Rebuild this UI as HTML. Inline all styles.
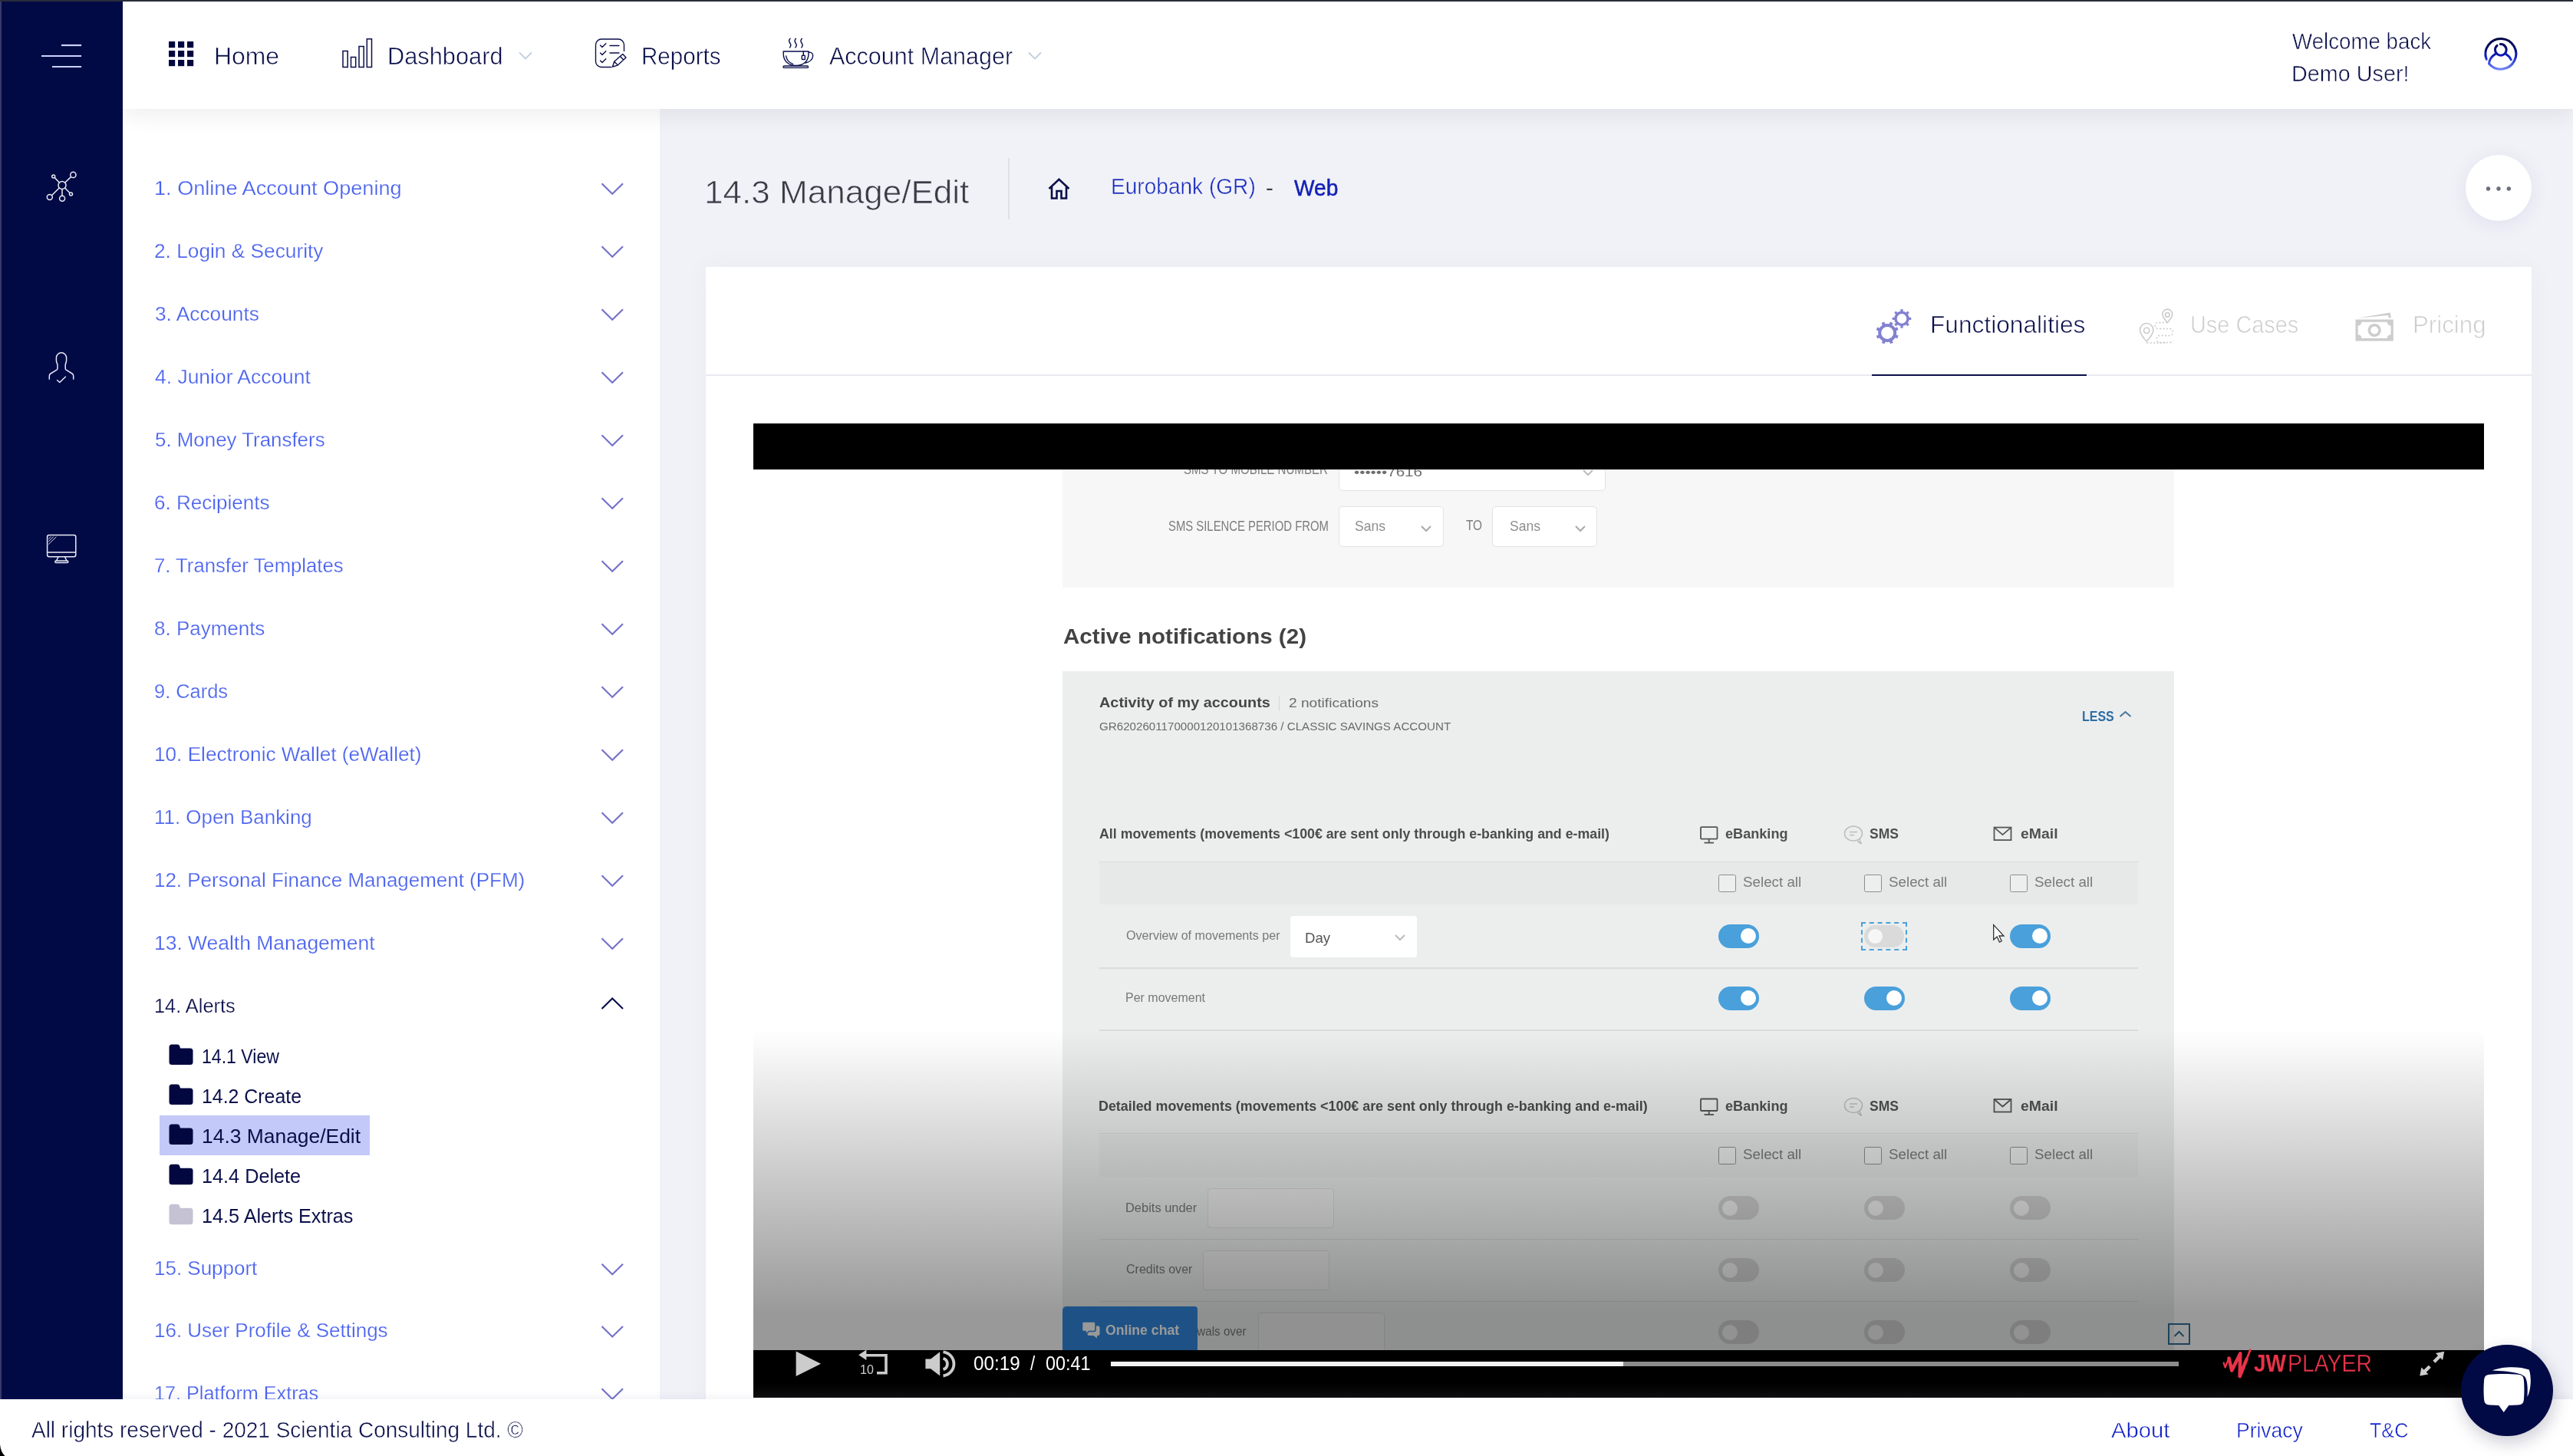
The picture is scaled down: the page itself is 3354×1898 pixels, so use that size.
<!DOCTYPE html>
<html lang="en">
<head>
<meta charset="utf-8">
<title>14.3 Manage/Edit</title>
<style>
*{box-sizing:border-box;margin:0;padding:0}
html,body{width:100%;height:100%;overflow:hidden;background:#f1f2f7;font-family:"Liberation Sans",sans-serif;color:#0a0f4a}
.abs{position:absolute}
.t{position:absolute;white-space:nowrap;line-height:1}
#topline{left:0;top:0;width:3354px;height:2px;background:#2a2d3a;z-index:50}
#leftedge{left:0;top:2px;width:2px;height:1822px;background:#363a6b;z-index:50}
#sidebar{left:0;top:0;width:160px;height:1824px;background:#020a45;z-index:5}
#header{left:160px;top:0;width:3194px;height:142px;background:#fff;box-shadow:0 6px 28px rgba(40,40,80,.09);z-index:4}
#menu{left:160px;top:142px;width:700px;height:1682px;background:#fff;z-index:2;overflow:hidden}
#main{left:860px;top:142px;width:2494px;height:1682px;background:#f1f2f7;z-index:1}
#card{left:920px;top:348px;width:2380px;height:1500px;background:#fff;z-index:3;box-shadow:0 0 30px rgba(80,80,140,.045)}
#footer{left:0;top:1824px;width:3354px;height:74px;background:#fff;z-index:20;box-shadow:0 -3px 10px rgba(90,90,150,.07)}
svg{position:absolute;overflow:visible}
</style>
</head>
<body>
<div id="root" style="position:absolute;left:0;top:0;width:3354px;height:1898px;transform-origin:0 0;overflow:hidden;background:#f1f2f7">
<div class="abs" id="topline"></div>
<div class="abs" id="sidebar"></div>
<div class="abs" id="leftedge"></div>
<div class="abs" id="header"></div>
<div class="abs" id="menu"></div>
<div class="abs" id="main"></div>
<div class="abs" id="card"></div>
<div class="abs" id="footer"></div>
<div class="abs" style="left:0;top:0;z-index:6">
<svg style="left:0;top:0" width="160" height="141"><g stroke="#ccd2ff" stroke-width="2.200" stroke-linecap="butt"><line x1="80" y1="59" x2="106.100" y2="59"/><line x1="54" y1="73" x2="106.100" y2="73"/><line x1="68" y1="87" x2="106.100" y2="87"/></g></svg>
<svg style="left:0;top:0" width="160" height="300"><g stroke="#ebebf4" stroke-width="1.500" fill="none"><circle cx="81" cy="241.500" r="5"/><circle cx="95.400" cy="227.900" r="3.600"/><circle cx="69.700" cy="230" r="2"/><circle cx="64.800" cy="257.100" r="3.500"/><circle cx="81.100" cy="258.700" r="3.500"/><circle cx="92.500" cy="252.900" r="2"/><line x1="84.700" y1="238" x2="92.700" y2="230.400"/><line x1="77.300" y1="238" x2="71.200" y2="231.500"/><line x1="77.300" y1="245" x2="67.400" y2="254.700"/><line x1="81" y1="246.500" x2="81" y2="255.200"/><line x1="84.600" y1="245" x2="91" y2="251.500"/></g></svg>
<svg style="left:0;top:0" width="160" height="520"><g stroke="#e8e8f2" stroke-width="1.500" fill="none" stroke-linecap="butt" stroke-linejoin="round"><path d="M64.300 494.700 V490 Q64.300 488 66 487 L74 482.200 Q75 481.500 75 480 V476 Q75 474.500 74.200 473.500 Q73.400 472 73.400 469 V466.400 A6.600 6.600 0 0 1 86.600 466.400 V469 Q86.600 472 85.800 473.500 Q85.200 474.500 85.200 476 V480 Q85.200 481.500 86.200 482.200 L94 487 Q95.700 488 95.700 490 V494.700"/><path d="M74.200 495.200 L77.800 498.500 L85.800 490.800"/></g></svg>
<svg style="left:0;top:0" width="160" height="760"><g stroke="#ebebf4" stroke-width="1.500" fill="none" stroke-linejoin="round"><rect x="61.600" y="697.400" width="37.200" height="28.300" rx="2.500"/><line x1="61.600" y1="720" x2="98.800" y2="720"/><path d="M76 726 L73.500 731 M84.500 726 L87 731"/><rect x="71.800" y="731" width="17" height="2.400" rx="1.200"/><g stroke-width="0.900"><line x1="63.200" y1="702.500" x2="66.500" y2="699.500"/><line x1="63.200" y1="705.800" x2="69.800" y2="699.700"/><line x1="63.200" y1="709.600" x2="73.400" y2="699.700"/></g></g></svg>
</div>
<div class="abs" style="left:0;top:0;z-index:7">
<svg style="left:0;top:0" width="300" height="141"><g fill="#02073f"><rect x="220" y="54" width="8.2" height="8.2"/><rect x="232" y="54" width="8.2" height="8.2"/><rect x="244" y="54" width="8.2" height="8.2"/><rect x="220" y="66" width="8.2" height="8.2"/><rect x="232" y="66" width="8.2" height="8.2"/><rect x="244" y="66" width="8.2" height="8.2"/><rect x="220" y="78" width="8.2" height="8.2"/><rect x="232" y="78" width="8.2" height="8.2"/><rect x="244" y="78" width="8.2" height="8.2"/></g></svg>
<div class="t " style="left:279.39px;top:58.2px;font-size:30.5px;color:#0a0f4a;transform:scaleX(1.0451);transform-origin:0 0;-webkit-text-stroke:0.55px #fff;">Home</div>
<svg style="left:0;top:0" width="600" height="141"><g stroke="#0a0f4a" stroke-width="1.500" fill="none"><rect x="447" y="66.500" width="6.200" height="21"/><rect x="457.500" y="74.500" width="6.200" height="13"/><rect x="468" y="60.500" width="6.200" height="27"/><rect x="478.300" y="50.800" width="6.200" height="36.700"/></g></svg>
<div class="t " style="left:505.48px;top:58.2px;font-size:30.5px;color:#0a0f4a;transform:scaleX(1.0087);transform-origin:0 0;-webkit-text-stroke:0.55px #fff;">Dashboard</div>
<svg style="left:0;top:0" width="800" height="141"><polyline points="677,68.500 685,76.500 693,68.500" stroke="#c3cde0" stroke-width="1.800" fill="none"/></svg>
<svg style="left:0;top:0" width="900" height="141"><g stroke="#0a0f4a" stroke-width="1.400" fill="none" stroke-linecap="round" stroke-linejoin="round"><path d="M797 87.500 h-13 a7.500 7.500 0 0 1 -7.500 -7.500 v-21.500 a7.500 7.500 0 0 1 7.500 -7.500 h22 a7.500 7.500 0 0 1 7.500 7.500 v8"/><path d="M782.500 59 l2.500 2.500 l4.800 -4.800 M782.500 69 l2.500 2.500 l4.800 -4.800 M782.500 79 l2.500 2.500 l4.800 -4.800 M795 59.500 h12 M795 69 h12"/><path d="M798.500 87 l2.200 -6.800 l11 -9.700 l4.300 4.600 l-10.800 10 z M801 80.500 l4 4.300 M808.500 73.500 l4.200 4.500"/></g></svg>
<div class="t " style="left:835.58px;top:58.2px;font-size:30.5px;color:#0a0f4a;transform:scaleX(0.9691);transform-origin:0 0;-webkit-text-stroke:0.55px #fff;">Reports</div>
<svg style="left:0;top:0" width="1100" height="141"><g stroke="#0a0f4a" stroke-width="1.400" fill="none" stroke-linecap="round" stroke-linejoin="round"><path d="M1021.200 67 H1054 V70 C1054 80 1047 85.500 1037.600 85.500 C1028.200 85.500 1021.200 80 1021.200 70 Z"/><path d="M1054 68 Q1060.300 68 1059.600 73.500 Q1058.500 80 1050 82"/><path d="M1024.600 73 Q1026 81 1033.500 83.300"/><rect x="1045.300" y="72.300" width="4" height="5.200" rx="0.800"/><line x1="1047.300" y1="67" x2="1047.300" y2="72.300"/><rect x="1021" y="86" width="32.500" height="2.400" rx="1.200"/><path d="M1030 50.300 q-2.600 3 -0.200 6 q2.200 2.800 -0.300 5.600"/><path d="M1037.4 50.300 q-2.600 3 -0.200 6 q2.200 2.800 -0.300 5.600"/><path d="M1045.3 50.300 q-2.600 3 -0.200 6 q2.200 2.800 -0.300 5.600"/></g></svg>
<div class="t " style="left:1080.94px;top:58.2px;font-size:30.5px;color:#0a0f4a;transform:scaleX(1.0004);transform-origin:0 0;-webkit-text-stroke:0.55px #fff;">Account Manager</div>
<svg style="left:0;top:0" width="1400" height="141"><polyline points="1341,68.500 1349,76.500 1357,68.500" stroke="#c3cde0" stroke-width="1.800" fill="none"/></svg>
<div class="t " style="left:2987.88px;top:39.2px;font-size:30px;color:#0a0f4a;transform:scaleX(0.9230);transform-origin:0 0;-webkit-text-stroke:0.55px #fff;">Welcome back</div>
<div class="t " style="left:2986.64px;top:81.2px;font-size:30px;color:#0a0f4a;transform:scaleX(0.9590);transform-origin:0 0;-webkit-text-stroke:0.55px #fff;">Demo User!</div>
<svg style="left:0;top:0" width="3354" height="141"><defs><linearGradient id="ug" gradientUnits="userSpaceOnUse" x1="0" y1="49" x2="0" y2="92"><stop offset="0" stop-color="#020540"/><stop offset="0.3" stop-color="#050a66"/><stop offset="0.55" stop-color="#0c1cc0"/><stop offset="1" stop-color="#7a8bff"/></linearGradient></defs><g stroke="url(#ug)" stroke-width="3" fill="none" stroke-linecap="round"><path d="M3241.200 77.300 A19.900 19.900 0 1 1 3244.500 83 A16.500 16.500 0 0 1 3252.400 70.700"/><path d="M3266.900 70.700 A16.500 16.500 0 0 1 3273.300 77.800"/><path d="M3259.350 57.600 A7.300 7.300 0 1 1 3255.050 59.350"/></g></svg>
</div>
<div class="abs" style="left:0;top:0;z-index:8">
<div class="t " style="left:200.53px;top:231.7px;font-size:26.5px;color:#4a62ee;transform:scaleX(1.0233);transform-origin:0 0;-webkit-text-stroke:0.25px #fff;">1. Online Account Opening</div>
<svg style="left:0;top:0" width="860" height="10"><polyline points="784.5,239.3 798.2,252.8 812,239.3" stroke="#7472c9" stroke-width="2.200" fill="none"/></svg>
<div class="t " style="left:201.28px;top:313.7px;font-size:26.5px;color:#4a62ee;transform:scaleX(0.9912);transform-origin:0 0;-webkit-text-stroke:0.25px #fff;">2. Login &amp; Security</div>
<svg style="left:0;top:0" width="860" height="10"><polyline points="784.5,321.3 798.2,334.8 812,321.3" stroke="#7472c9" stroke-width="2.200" fill="none"/></svg>
<div class="t " style="left:201.60px;top:395.7px;font-size:26.5px;color:#4a62ee;transform:scaleX(0.9916);transform-origin:0 0;-webkit-text-stroke:0.25px #fff;">3. Accounts</div>
<svg style="left:0;top:0" width="860" height="10"><polyline points="784.5,403.3 798.2,416.8 812,403.3" stroke="#7472c9" stroke-width="2.200" fill="none"/></svg>
<div class="t " style="left:201.99px;top:477.7px;font-size:26.5px;color:#4a62ee;transform:scaleX(0.9980);transform-origin:0 0;-webkit-text-stroke:0.25px #fff;">4. Junior Account</div>
<svg style="left:0;top:0" width="860" height="10"><polyline points="784.5,485.3 798.2,498.8 812,485.3" stroke="#7472c9" stroke-width="2.200" fill="none"/></svg>
<div class="t " style="left:201.56px;top:559.7px;font-size:26.5px;color:#4a62ee;transform:scaleX(0.9769);transform-origin:0 0;-webkit-text-stroke:0.25px #fff;">5. Money Transfers</div>
<svg style="left:0;top:0" width="860" height="10"><polyline points="784.5,567.3 798.2,580.8 812,567.3" stroke="#7472c9" stroke-width="2.200" fill="none"/></svg>
<div class="t " style="left:201.28px;top:641.7px;font-size:26.5px;color:#4a62ee;transform:scaleX(0.9822);transform-origin:0 0;-webkit-text-stroke:0.25px #fff;">6. Recipients</div>
<svg style="left:0;top:0" width="860" height="10"><polyline points="784.5,649.3 798.2,662.8 812,649.3" stroke="#7472c9" stroke-width="2.200" fill="none"/></svg>
<div class="t " style="left:201.28px;top:723.7px;font-size:26.5px;color:#4a62ee;transform:scaleX(0.9698);transform-origin:0 0;-webkit-text-stroke:0.25px #fff;">7. Transfer Templates</div>
<svg style="left:0;top:0" width="860" height="10"><polyline points="784.5,731.3 798.2,744.8 812,731.3" stroke="#7472c9" stroke-width="2.200" fill="none"/></svg>
<div class="t " style="left:201.47px;top:805.7px;font-size:26.5px;color:#4a62ee;transform:scaleX(0.9801);transform-origin:0 0;-webkit-text-stroke:0.25px #fff;">8. Payments</div>
<svg style="left:0;top:0" width="860" height="10"><polyline points="784.5,813.3 798.2,826.8 812,813.3" stroke="#7472c9" stroke-width="2.200" fill="none"/></svg>
<div class="t " style="left:201.41px;top:887.7px;font-size:26.5px;color:#4a62ee;transform:scaleX(0.9586);transform-origin:0 0;-webkit-text-stroke:0.25px #fff;">9. Cards</div>
<svg style="left:0;top:0" width="860" height="10"><polyline points="784.5,895.3 798.2,908.8 812,895.3" stroke="#7472c9" stroke-width="2.200" fill="none"/></svg>
<div class="t " style="left:200.61px;top:969.7px;font-size:26.5px;color:#4a62ee;transform:scaleX(0.9874);transform-origin:0 0;-webkit-text-stroke:0.25px #fff;">10. Electronic Wallet (eWallet)</div>
<svg style="left:0;top:0" width="860" height="10"><polyline points="784.5,977.3 798.2,990.8 812,977.3" stroke="#7472c9" stroke-width="2.200" fill="none"/></svg>
<div class="t " style="left:200.62px;top:1051.7px;font-size:26.5px;color:#4a62ee;transform:scaleX(0.9788);transform-origin:0 0;-webkit-text-stroke:0.25px #fff;">11. Open Banking</div>
<svg style="left:0;top:0" width="860" height="10"><polyline points="784.5,1059.3 798.2,1072.8 812,1059.3" stroke="#7472c9" stroke-width="2.200" fill="none"/></svg>
<div class="t " style="left:200.62px;top:1133.7px;font-size:26.5px;color:#4a62ee;transform:scaleX(0.9792);transform-origin:0 0;-webkit-text-stroke:0.25px #fff;">12. Personal Finance Management (PFM)</div>
<svg style="left:0;top:0" width="860" height="10"><polyline points="784.5,1141.3 798.2,1154.8 812,1141.3" stroke="#7472c9" stroke-width="2.200" fill="none"/></svg>
<div class="t " style="left:200.59px;top:1215.7px;font-size:26.5px;color:#4a62ee;transform:scaleX(0.9978);transform-origin:0 0;-webkit-text-stroke:0.25px #fff;">13. Wealth Management</div>
<svg style="left:0;top:0" width="860" height="10"><polyline points="784.5,1223.3 798.2,1236.8 812,1223.3" stroke="#7472c9" stroke-width="2.200" fill="none"/></svg>
<div class="t " style="left:200.67px;top:1297.6px;font-size:26.5px;color:#0a0f4a;transform:scaleX(0.9562);transform-origin:0 0;-webkit-text-stroke:0.25px #fff;">14. Alerts</div>
<svg style="left:0;top:0" width="860" height="10"><polyline points="784.5,1315.0 798.2,1301.5 812,1315.0" stroke="#0a0f4a" stroke-width="2.200" fill="none"/></svg>
<div class="abs" style="left:208.100px;top:1453.900px;width:273.900px;height:51.900px;background:#c3c9f8"></div>
<svg style="left:0;top:0" width="860" height="10"><path d="M220.500 1364.9 q0 -3.500 3.500 -3.500 h7 q2.500 0 3.200 2.200 l0.800 2.800 h13 q3.500 0 3.500 3.500 v14.500 q0 3.500 -3.500 3.500 h-24 q-3.500 0 -3.500 -3.500 z" fill="#02073f"/></svg>
<div class="t " style="left:262.94px;top:1364.8px;font-size:25.8px;color:#0a0f4a;transform:scaleX(0.8951);transform-origin:0 0;">14.1 View</div>
<svg style="left:0;top:0" width="860" height="10"><path d="M220.500 1417.0 q0 -3.500 3.500 -3.500 h7 q2.500 0 3.200 2.200 l0.800 2.800 h13 q3.500 0 3.500 3.500 v14.500 q0 3.500 -3.500 3.500 h-24 q-3.500 0 -3.500 -3.500 z" fill="#02073f"/></svg>
<div class="t " style="left:262.81px;top:1416.9px;font-size:25.8px;color:#0a0f4a;transform:scaleX(0.9642);transform-origin:0 0;">14.2 Create</div>
<svg style="left:0;top:0" width="860" height="10"><path d="M220.500 1469.1 q0 -3.500 3.500 -3.500 h7 q2.500 0 3.200 2.200 l0.800 2.800 h13 q3.500 0 3.500 3.500 v14.500 q0 3.500 -3.500 3.500 h-24 q-3.500 0 -3.500 -3.500 z" fill="#02073f"/></svg>
<div class="t " style="left:262.69px;top:1469.0px;font-size:25.8px;color:#0a0f4a;transform:scaleX(1.0240);transform-origin:0 0;">14.3 Manage/Edit</div>
<svg style="left:0;top:0" width="860" height="10"><path d="M220.500 1521.2 q0 -3.500 3.500 -3.500 h7 q2.500 0 3.200 2.200 l0.800 2.800 h13 q3.500 0 3.500 3.500 v14.500 q0 3.500 -3.500 3.500 h-24 q-3.500 0 -3.500 -3.500 z" fill="#02073f"/></svg>
<div class="t " style="left:262.78px;top:1521.1px;font-size:25.8px;color:#0a0f4a;transform:scaleX(0.9786);transform-origin:0 0;">14.4 Delete</div>
<svg style="left:0;top:0" width="860" height="10"><path d="M220.500 1573.3 q0 -3.500 3.500 -3.500 h7 q2.500 0 3.200 2.200 l0.800 2.800 h13 q3.500 0 3.500 3.500 v14.500 q0 3.500 -3.500 3.500 h-24 q-3.500 0 -3.500 -3.500 z" fill="#c5c2d4"/></svg>
<div class="t " style="left:262.78px;top:1573.2px;font-size:25.8px;color:#0a0f4a;transform:scaleX(0.9764);transform-origin:0 0;">14.5 Alerts Extras</div>
<div class="t " style="left:200.62px;top:1640.1px;font-size:26.5px;color:#4a62ee;transform:scaleX(0.9799);transform-origin:0 0;-webkit-text-stroke:0.25px #fff;">15. Support</div>
<svg style="left:0;top:0" width="860" height="10"><polyline points="784.5,1647.7 798.2,1661.2 812,1647.7" stroke="#7472c9" stroke-width="2.200" fill="none"/></svg>
<div class="t " style="left:200.62px;top:1721.4px;font-size:26.5px;color:#4a62ee;transform:scaleX(0.9801);transform-origin:0 0;-webkit-text-stroke:0.25px #fff;">16. User Profile &amp; Settings</div>
<svg style="left:0;top:0" width="860" height="10"><polyline points="784.5,1729.0 798.2,1742.5 812,1729.0" stroke="#7472c9" stroke-width="2.200" fill="none"/></svg>
<div class="t " style="left:200.68px;top:1802.7px;font-size:26.5px;color:#4a62ee;transform:scaleX(0.9507);transform-origin:0 0;-webkit-text-stroke:0.25px #fff;">17. Platform Extras</div>
<svg style="left:0;top:0" width="860" height="10"><polyline points="784.5,1810.3 798.2,1823.8 812,1810.3" stroke="#7472c9" stroke-width="2.200" fill="none"/></svg>
</div>
<div class="abs" style="left:0;top:0;z-index:9">
<div class="t " style="left:917.64px;top:229.0px;font-size:43px;color:#3a3b46;transform:scaleX(1.0246);transform-origin:0 0;-webkit-text-stroke:0.7px #f1f2f7;">14.3 Manage/Edit</div>
<div class="abs" style="left:1314px;top:206px;width:2px;height:80px;background:#dfe0e8"></div>
<svg style="left:0;top:0" width="1500" height="300"><path d="M1367.500 246 l13 -12.200 l13 12.200 M1371 243.500 v15 h6.500 v-9.500 h6 v9.500 h6.500 v-15" stroke="#0a0f4a" stroke-width="2.600" fill="none" stroke-linejoin="miter"/></svg>
<div class="t " style="left:1447.70px;top:228.3px;font-size:29.5px;color:#1b2cbe;transform:scaleX(0.9514);transform-origin:0 0;-webkit-text-stroke:0.45px #f1f2f7;">Eurobank (GR)</div>
<div class="t " style="left:1650.09px;top:231.3px;font-size:28px;color:#3a3b46;transform:scaleX(1.0533);transform-origin:0 0;">-</div>
<div class="t " style="left:1686.88px;top:230.4px;font-size:29.5px;color:#1320b5;transform:scaleX(0.9531);transform-origin:0 0;-webkit-text-stroke:0.5px #1320b5;">Web</div>
<div class="abs" style="left:3214px;top:202px;width:86px;height:86px;border-radius:50%;background:#fff;box-shadow:0 4px 24px rgba(90,90,170,.12)"></div>
<svg style="left:0;top:0" width="3354" height="300"><g fill="#6b6e7c"><circle cx="3243.500" cy="246" r="2.700"/><circle cx="3257" cy="246" r="2.700"/><circle cx="3270.300" cy="246" r="2.700"/></g></svg>
<div class="abs" style="left:920px;top:488px;width:2380px;height:2px;background:#e9eaf1"></div>
<div class="abs" style="left:2440px;top:487.500px;width:280px;height:2.500px;background:#0a0f4a"></div>
<svg style="left:0;top:0" width="3354" height="500"><circle cx="2460.2" cy="433.9" r="10.00" stroke="#8381d1" stroke-width="4.00" fill="none"/><rect x="2458.22" y="419.10" width="3.96" height="4.30" fill="#8381d1" transform="rotate(22.0 2460.2 433.9)"/><rect x="2458.22" y="419.10" width="3.96" height="4.30" fill="#8381d1" transform="rotate(67.0 2460.2 433.9)"/><rect x="2458.22" y="419.10" width="3.96" height="4.30" fill="#8381d1" transform="rotate(112.0 2460.2 433.9)"/><rect x="2458.22" y="419.10" width="3.96" height="4.30" fill="#8381d1" transform="rotate(157.0 2460.2 433.9)"/><rect x="2458.22" y="419.10" width="3.96" height="4.30" fill="#8381d1" transform="rotate(202.0 2460.2 433.9)"/><rect x="2458.22" y="419.10" width="3.96" height="4.30" fill="#8381d1" transform="rotate(247.0 2460.2 433.9)"/><rect x="2458.22" y="419.10" width="3.96" height="4.30" fill="#8381d1" transform="rotate(292.0 2460.2 433.9)"/><rect x="2458.22" y="419.10" width="3.96" height="4.30" fill="#8381d1" transform="rotate(337.0 2460.2 433.9)"/><circle cx="2479" cy="415.4" r="8.05" stroke="#8381d1" stroke-width="3.50" fill="none"/><rect x="2477.38" y="403.10" width="3.23" height="4.00" fill="#8381d1" transform="rotate(0.0 2479 415.4)"/><rect x="2477.38" y="403.10" width="3.23" height="4.00" fill="#8381d1" transform="rotate(45.0 2479 415.4)"/><rect x="2477.38" y="403.10" width="3.23" height="4.00" fill="#8381d1" transform="rotate(90.0 2479 415.4)"/><rect x="2477.38" y="403.10" width="3.23" height="4.00" fill="#8381d1" transform="rotate(135.0 2479 415.4)"/><rect x="2477.38" y="403.10" width="3.23" height="4.00" fill="#8381d1" transform="rotate(180.0 2479 415.4)"/><rect x="2477.38" y="403.10" width="3.23" height="4.00" fill="#8381d1" transform="rotate(225.0 2479 415.4)"/><rect x="2477.38" y="403.10" width="3.23" height="4.00" fill="#8381d1" transform="rotate(270.0 2479 415.4)"/><rect x="2477.38" y="403.10" width="3.23" height="4.00" fill="#8381d1" transform="rotate(315.0 2479 415.4)"/></svg>
<svg style="left:0;top:0" width="3354" height="500"><g stroke="#cbcbcb" stroke-width="1.600" fill="none"><path d="M2798.200 445 q-8.700 -9.500 -8.700 -14.800 a8.700 8.700 0 0 1 17.400 0 q0 5.300 -8.700 14.800 z"/><circle cx="2798.200" cy="430.800" r="3.600"/><path d="M2825.300 420.500 q-6.400 -7 -6.400 -11 a6.400 6.400 0 0 1 12.800 0 q0 4 -6.400 11 z"/><circle cx="2825.300" cy="410.300" r="2.800"/><path d="M2825.300 420.500 h-12 q-4 0 -4 4 t4 4 h15 q4 0 4 4.500 t-4 4.500 h-13 q-4 0 -4 4.500 t4 4.500 h13 q4 0 4 -2 M2798.200 447 h26" stroke-dasharray="2.200 2.200" stroke-width="1.400"/></g></svg>
<svg style="left:0;top:0" width="3354" height="500"><g fill="#cdcdcd"><path d="M3070.500 416.400 h49.300 v28.100 h-49.300 z M3078.500 419.800 a4.800 4.800 0 0 1 -4.800 4.800 v11.600 a4.800 4.800 0 0 1 4.800 4.800 h33.300 a4.800 4.800 0 0 1 4.800 -4.800 v-11.600 a4.800 4.800 0 0 1 -4.800 -4.800 z" fill-rule="evenodd"/><path d="M3095.200 421.900 a8.600 8.600 0 1 0 0.010 0 z M3095.200 425.500 a5 5 0 1 1 -0.010 0 z" fill-rule="evenodd"/><path d="M3073.400 414.700 l42.200 -7.300 l1.400 6.800 l-3.200 0.300 l-0.700 -3.600 z"/></g></svg>
<div class="t " style="left:2516.20px;top:407.7px;font-size:31px;color:#0a0f4a;transform:scaleX(1.0216);transform-origin:0 0;-webkit-text-stroke:0.6px #fff;">Functionalities</div>
<div class="t " style="left:2855.37px;top:407.7px;font-size:31px;color:#cdcdcd;transform:scaleX(0.9318);transform-origin:0 0;-webkit-text-stroke:0.7px #fff;">Use Cases</div>
<div class="t " style="left:3144.73px;top:407.7px;font-size:31px;color:#cdcdcd;transform:scaleX(1.0087);transform-origin:0 0;-webkit-text-stroke:0.7px #fff;">Pricing</div>
</div>
<div class="abs" style="left:0;top:0;z-index:21">
<div class="t " style="left:40.55px;top:1850.0px;font-size:29px;color:#0a0f4a;transform:scaleX(0.9644);transform-origin:0 0;-webkit-text-stroke:0.5px #fff;">All rights reserved - 2021 Scientia Consulting Ltd. ©</div>
<div class="t " style="left:2751.94px;top:1849.9px;font-size:28.5px;color:#0f1fc8;transform:scaleX(1.0240);transform-origin:0 0;-webkit-text-stroke:0.5px #fff;">About</div>
<div class="t " style="left:2914.83px;top:1849.9px;font-size:28.5px;color:#0f1fc8;transform:scaleX(0.9293);transform-origin:0 0;-webkit-text-stroke:0.5px #fff;">Privacy</div>
<div class="t " style="left:3089.23px;top:1849.9px;font-size:28.5px;color:#0f1fc8;transform:scaleX(0.8829);transform-origin:0 0;-webkit-text-stroke:0.5px #fff;">T&amp;C</div>
</div>
<div class="abs" style="left:982px;top:552px;width:2256px;height:1270px;background:#000;overflow:hidden;z-index:10">
<div class="abs" id="vf" style="left:-982px;top:-552px;width:3354px;height:1898px">
<div class="abs" style="left:982px;top:612px;width:2256px;height:1148px;background:#fff"></div>
<div class="abs" id="vc" style="left:0;top:0;width:3354px;height:1898px;filter:blur(0.6px)">
<div class="abs" style="left:1385px;top:600px;width:1449px;height:166px;background:#f7f7f7"></div>
<div class="abs" style="left:1385px;top:875px;width:1449px;height:900px;background:#eceeee"></div>
<div class="t " style="left:1542.82px;top:602.8px;font-size:18px;color:#7c7c7c;transform:scaleX(0.8373);transform-origin:0 0;">SMS TO MOBILE NUMBER</div>
<div class="abs" style="left:1745px;top:590px;width:348px;height:50px;background:#fff;border:1.500px solid #e2e2e2;border-radius:5px"></div>
<div class="t " style="left:1764.89px;top:606.6px;font-size:17px;color:#6e6e6e;transform:scaleX(1.2106);transform-origin:0 0;">••••••7616</div>
<svg style="left:0;top:0" width="2200" height="700"><polyline points="2064,613 2070,619 2076,613" stroke="#bbb" stroke-width="2" fill="none"/></svg>
<div class="t " style="left:1522.93px;top:676.8px;font-size:18px;color:#7c7c7c;transform:scaleX(0.8255);transform-origin:0 0;">SMS SILENCE PERIOD FROM</div>
<div class="abs" style="left:1745px;top:660px;width:137px;height:53px;background:#fff;border:1.500px solid #e2e2e2;border-radius:5px"></div>
<div class="t " style="left:1766.20px;top:675.5px;font-size:19px;color:#8d8d8d;transform:scaleX(0.9244);transform-origin:0 0;">Sans</div>
<div class="t " style="left:1911.35px;top:676.3px;font-size:18px;color:#7c7c7c;transform:scaleX(0.8545);transform-origin:0 0;">TO</div>
<div class="abs" style="left:1945px;top:660px;width:137px;height:53px;background:#fff;border:1.500px solid #e2e2e2;border-radius:5px"></div>
<div class="t " style="left:1967.60px;top:675.5px;font-size:19px;color:#8d8d8d;transform:scaleX(0.9244);transform-origin:0 0;">Sans</div>
<svg style="left:0;top:0" width="2200" height="720"><polyline points="1853,686 1859,692 1865,686" stroke="#aaa" stroke-width="2" fill="none"/><polyline points="2054,686 2060,692 2066,686" stroke="#aaa" stroke-width="2" fill="none"/></svg>
<div class="t " style="left:1386.06px;top:816.1px;font-size:28px;color:#434343;font-weight:bold;transform:scaleX(1.0557);transform-origin:0 0;">Active notifications (2)</div>
<div class="t " style="left:1432.91px;top:905.9px;font-size:19px;color:#474747;font-weight:bold;transform:scaleX(1.0451);transform-origin:0 0;">Activity of my accounts</div>
<div class="abs" style="left:1667px;top:908px;width:1.2px;height:19px;background:#d6d6d6"></div>
<div class="t " style="left:1679.64px;top:907.6px;font-size:17px;color:#6a6a6a;transform:scaleX(1.1260);transform-origin:0 0;">2 notifications</div>
<div class="t " style="left:1432.64px;top:939.2px;font-size:15.5px;color:#6a6a6a;transform:scaleX(0.9769);transform-origin:0 0;">GR6202601170000120101368736 / CLASSIC SAVINGS ACCOUNT</div>
<div class="t " style="left:2713.93px;top:924.8px;font-size:18px;color:#2e6ea6;font-weight:bold;transform:scaleX(0.8868);transform-origin:0 0;">LESS</div>
<svg style="left:0;top:0" width="2800" height="950"><polyline points="2763.500,934 2770.500,928 2777.500,934" stroke="#4a739c" stroke-width="2" fill="none"/></svg>
<div class="t " style="left:1432.96px;top:1078.4px;font-size:18px;color:#4c4c4c;font-weight:bold;transform:scaleX(0.9870);transform-origin:0 0;">All movements (movements &lt;100€ are sent only through e-banking and e-mail)</div>
<svg style="left:0;top:0" width="2800" height="10"><g stroke="#555" stroke-width="1.800" fill="none"><rect x="2217" y="1078.1" width="21.500" height="15.500" rx="1"/><line x1="2227.700" y1="1093.6" x2="2227.700" y2="1098.1"/><line x1="2221.500" y1="1098.6" x2="2234" y2="1098.6"/></g><g stroke="#bdbdbd" stroke-width="1.500" fill="none"><ellipse cx="2416" cy="1086.6" rx="11.500" ry="9.500"/><path d="M2421 1095.1 q2 4 6 4.500 q-3 -2 -2.500 -6.500"/><line x1="2411" y1="1084.6" x2="2421" y2="1084.6"/><line x1="2411" y1="1088.6" x2="2417" y2="1088.6"/></g><g stroke="#555" stroke-width="1.800" fill="none"><rect x="2599.500" y="1078.6" width="22" height="16.500"/><polyline points="2599.500,1078.6 2610.500,1088.1 2621.500,1078.6"/></g></svg>
<div class="t " style="left:2249.29px;top:1078.4px;font-size:18px;color:#505050;font-weight:bold;transform:scaleX(1.0062);transform-origin:0 0;">eBanking</div>
<div class="t " style="left:2436.50px;top:1078.4px;font-size:18px;color:#505050;font-weight:bold;transform:scaleX(0.9713);transform-origin:0 0;">SMS</div>
<div class="t " style="left:2633.84px;top:1078.4px;font-size:18px;color:#505050;font-weight:bold;transform:scaleX(1.0780);transform-origin:0 0;">eMail</div>
<div class="abs" style="left:1433px;top:1122.6px;width:1354px;height:1.400px;background:#d9dbdc"></div>
<div class="abs" style="left:1433px;top:1124px;width:1354px;height:55px;background:rgba(120,110,110,.035)"></div>
<div class="abs" style="left:2239.5px;top:1139.5px;width:23.500px;height:23.500px;border:1.800px solid #8e8e8e;border-radius:2.500px;background:rgba(255,255,255,.25)"></div>
<div class="t " style="left:2271.85px;top:1141.4px;font-size:18px;color:#7a7a7a;transform:scaleX(1.0434);transform-origin:0 0;">Select all</div>
<div class="abs" style="left:2429.5px;top:1139.5px;width:23.500px;height:23.500px;border:1.800px solid #8e8e8e;border-radius:2.500px;background:rgba(255,255,255,.25)"></div>
<div class="t " style="left:2461.85px;top:1141.4px;font-size:18px;color:#7a7a7a;transform:scaleX(1.0434);transform-origin:0 0;">Select all</div>
<div class="abs" style="left:2619.5px;top:1139.5px;width:23.500px;height:23.500px;border:1.800px solid #8e8e8e;border-radius:2.500px;background:rgba(255,255,255,.25)"></div>
<div class="t " style="left:2651.85px;top:1141.4px;font-size:18px;color:#7a7a7a;transform:scaleX(1.0434);transform-origin:0 0;">Select all</div>
<div class="t " style="left:1467.64px;top:1210.6px;font-size:17px;color:#787878;transform:scaleX(0.9480);transform-origin:0 0;">Overview of movements per</div>
<div class="abs" style="left:1681.500px;top:1194.300px;width:165px;height:53.300px;background:#fff;border-radius:4px"></div>
<div class="t " style="left:1700.97px;top:1212.9px;font-size:19px;color:#555;transform:scaleX(0.9785);transform-origin:0 0;">Day</div>
<svg style="left:0;top:0" width="2200" height="1300"><polyline points="1819,1219 1825,1225 1831,1219" stroke="#bbb" stroke-width="2" fill="none"/></svg>
<div class="abs" style="left:2239.5px;top:1204.5px;width:53px;height:31px;border-radius:16px;background:#4aa0da"></div>
<div class="abs" style="left:2268.5px;top:1210.0px;width:20px;height:20px;border-radius:50%;background:#fff"></div>
<div class="abs" style="left:2426px;top:1201.500px;width:60px;height:37.500px;border:2px dashed #4aa0da"></div>
<div class="abs" style="left:2430px;top:1205.500px;width:52px;height:29.500px;border-radius:15px;background:#dadada"></div>
<div class="abs" style="left:2435px;top:1210.500px;width:19px;height:19px;border-radius:50%;background:#f6f6f6"></div>
<div class="abs" style="left:2619.5px;top:1204.5px;width:53px;height:31px;border-radius:16px;background:#4aa0da"></div>
<div class="abs" style="left:2648.5px;top:1210.0px;width:20px;height:20px;border-radius:50%;background:#fff"></div>
<svg style="left:0;top:0" width="2700" height="1300"><path d="M2598.700 1205.600 v19.500 l4.500 -4 l3.200 7 l2.800 -1.300 l-3.200 -6.800 h6 z" fill="#fff" stroke="#333" stroke-width="1.300"/></svg>
<div class="abs" style="left:1433px;top:1261.1999999999998px;width:1354px;height:1.400px;background:#d9dbdc"></div>
<div class="t " style="left:1467.09px;top:1291.6px;font-size:17px;color:#787878;transform:scaleX(0.9411);transform-origin:0 0;">Per movement</div>
<div class="abs" style="left:2239.5px;top:1285.5px;width:53px;height:31px;border-radius:16px;background:#4aa0da"></div>
<div class="abs" style="left:2268.5px;top:1291.0px;width:20px;height:20px;border-radius:50%;background:#fff"></div>
<div class="abs" style="left:2429.5px;top:1285.5px;width:53px;height:31px;border-radius:16px;background:#4aa0da"></div>
<div class="abs" style="left:2458.5px;top:1291.0px;width:20px;height:20px;border-radius:50%;background:#fff"></div>
<div class="abs" style="left:2619.5px;top:1285.5px;width:53px;height:31px;border-radius:16px;background:#4aa0da"></div>
<div class="abs" style="left:2648.5px;top:1291.0px;width:20px;height:20px;border-radius:50%;background:#fff"></div>
<div class="abs" style="left:1433px;top:1342.1999999999998px;width:1354px;height:1.400px;background:#d9dbdc"></div>
<div class="t " style="left:1432.20px;top:1432.8px;font-size:18px;color:#4c4c4c;font-weight:bold;transform:scaleX(0.9930);transform-origin:0 0;">Detailed movements (movements &lt;100€ are sent only through e-banking and e-mail)</div>
<svg style="left:0;top:0" width="2800" height="10"><g stroke="#555" stroke-width="1.800" fill="none"><rect x="2217" y="1432.5" width="21.500" height="15.500" rx="1"/><line x1="2227.700" y1="1448.0" x2="2227.700" y2="1452.5"/><line x1="2221.500" y1="1453.0" x2="2234" y2="1453.0"/></g><g stroke="#bdbdbd" stroke-width="1.500" fill="none"><ellipse cx="2416" cy="1441.0" rx="11.500" ry="9.500"/><path d="M2421 1449.5 q2 4 6 4.500 q-3 -2 -2.500 -6.500"/><line x1="2411" y1="1439.0" x2="2421" y2="1439.0"/><line x1="2411" y1="1443.0" x2="2417" y2="1443.0"/></g><g stroke="#555" stroke-width="1.800" fill="none"><rect x="2599.500" y="1433.0" width="22" height="16.500"/><polyline points="2599.500,1433.0 2610.500,1442.5 2621.500,1433.0"/></g></svg>
<div class="t " style="left:2249.29px;top:1432.8px;font-size:18px;color:#505050;font-weight:bold;transform:scaleX(1.0062);transform-origin:0 0;">eBanking</div>
<div class="t " style="left:2436.50px;top:1432.8px;font-size:18px;color:#505050;font-weight:bold;transform:scaleX(0.9713);transform-origin:0 0;">SMS</div>
<div class="t " style="left:2633.84px;top:1432.8px;font-size:18px;color:#505050;font-weight:bold;transform:scaleX(1.0780);transform-origin:0 0;">eMail</div>
<div class="abs" style="left:1433px;top:1476.6px;width:1354px;height:1.400px;background:#d9dbdc"></div>
<div class="abs" style="left:1433px;top:1479px;width:1354px;height:55px;background:rgba(120,110,110,.035)"></div>
<div class="abs" style="left:2239.5px;top:1494.5px;width:23.500px;height:23.500px;border:1.800px solid #8e8e8e;border-radius:2.500px;background:rgba(255,255,255,.25)"></div>
<div class="t " style="left:2271.85px;top:1496.4px;font-size:18px;color:#7a7a7a;transform:scaleX(1.0434);transform-origin:0 0;">Select all</div>
<div class="abs" style="left:2429.5px;top:1494.5px;width:23.500px;height:23.500px;border:1.800px solid #8e8e8e;border-radius:2.500px;background:rgba(255,255,255,.25)"></div>
<div class="t " style="left:2461.85px;top:1496.4px;font-size:18px;color:#7a7a7a;transform:scaleX(1.0434);transform-origin:0 0;">Select all</div>
<div class="abs" style="left:2619.5px;top:1494.5px;width:23.500px;height:23.500px;border:1.800px solid #8e8e8e;border-radius:2.500px;background:rgba(255,255,255,.25)"></div>
<div class="t " style="left:2651.85px;top:1496.4px;font-size:18px;color:#7a7a7a;transform:scaleX(1.0434);transform-origin:0 0;">Select all</div>
<div class="t " style="left:1467.05px;top:1565.6px;font-size:17px;color:#787878;transform:scaleX(0.9671);transform-origin:0 0;">Debits under</div>
<div class="abs" style="left:1574px;top:1549px;width:165px;height:52px;background:#f1f1f1;border:1.500px solid #dcdcdc;border-radius:4px"></div>
<div class="abs" style="left:2239.5px;top:1559px;width:53px;height:31px;border-radius:16px;background:#d2d2d2"></div>
<div class="abs" style="left:2244.5px;top:1564.5px;width:20px;height:20px;border-radius:50%;background:#f3f3f3"></div>
<div class="abs" style="left:2429.5px;top:1559px;width:53px;height:31px;border-radius:16px;background:#d2d2d2"></div>
<div class="abs" style="left:2434.5px;top:1564.5px;width:20px;height:20px;border-radius:50%;background:#f3f3f3"></div>
<div class="abs" style="left:2619.5px;top:1559px;width:53px;height:31px;border-radius:16px;background:#d2d2d2"></div>
<div class="abs" style="left:2624.5px;top:1564.5px;width:20px;height:20px;border-radius:50%;background:#f3f3f3"></div>
<div class="abs" style="left:1433px;top:1615.1px;width:1354px;height:1.400px;background:#d9dbdc"></div>
<div class="t " style="left:1467.59px;top:1645.6px;font-size:17px;color:#787878;transform:scaleX(0.9426);transform-origin:0 0;">Credits over</div>
<div class="abs" style="left:1568px;top:1630px;width:165px;height:52px;background:#f1f1f1;border:1.500px solid #dcdcdc;border-radius:4px"></div>
<div class="abs" style="left:2239.5px;top:1640px;width:53px;height:31px;border-radius:16px;background:#d2d2d2"></div>
<div class="abs" style="left:2244.5px;top:1645.5px;width:20px;height:20px;border-radius:50%;background:#f3f3f3"></div>
<div class="abs" style="left:2429.5px;top:1640px;width:53px;height:31px;border-radius:16px;background:#d2d2d2"></div>
<div class="abs" style="left:2434.5px;top:1645.5px;width:20px;height:20px;border-radius:50%;background:#f3f3f3"></div>
<div class="abs" style="left:2619.5px;top:1640px;width:53px;height:31px;border-radius:16px;background:#d2d2d2"></div>
<div class="abs" style="left:2624.5px;top:1645.5px;width:20px;height:20px;border-radius:50%;background:#f3f3f3"></div>
<div class="abs" style="left:1433px;top:1696.1px;width:1354px;height:1.400px;background:#d9dbdc"></div>
<div class="t " style="left:1508.41px;top:1727.0px;font-size:17px;color:#787878;transform:scaleX(0.8931);transform-origin:0 0;">Withdrawals over</div>
<div class="abs" style="left:1639.5px;top:1711px;width:165px;height:52px;background:#f1f1f1;border:1.500px solid #dcdcdc;border-radius:4px"></div>
<div class="abs" style="left:2239.5px;top:1721px;width:53px;height:31px;border-radius:16px;background:#d2d2d2"></div>
<div class="abs" style="left:2244.5px;top:1726.5px;width:20px;height:20px;border-radius:50%;background:#f3f3f3"></div>
<div class="abs" style="left:2429.5px;top:1721px;width:53px;height:31px;border-radius:16px;background:#d2d2d2"></div>
<div class="abs" style="left:2434.5px;top:1726.5px;width:20px;height:20px;border-radius:50%;background:#f3f3f3"></div>
<div class="abs" style="left:2619.5px;top:1721px;width:53px;height:31px;border-radius:16px;background:#d2d2d2"></div>
<div class="abs" style="left:2624.5px;top:1726.5px;width:20px;height:20px;border-radius:50%;background:#f3f3f3"></div>
<div class="abs" style="left:1384.500px;top:1703px;width:176.500px;height:60px;background:#3288e0;border-radius:5px 4px 0 0"></div>
<svg style="left:0;top:0" width="1500" height="1760"><g fill="#fff"><path d="M1419.500 1728.500 h12 q2 0 2 2 v8.500 q0 2 -2 2 h-1.500 l0 3.500 l-4.500 -3.500 h-6 q-2 0 -2 -2 v-8.500 q0 -2 2 -2 z"/><path d="M1412.500 1723 h13.500 q2 0 2 2 v8.500 q0 2 -2 2 h-6.500 l-4.500 3.800 v-3.800 h-2.500 q-2 0 -2 -2 v-8.500 q0 -2 2 -2 z" stroke="#3288e0" stroke-width="1.600"/></g></svg>
<div class="t " style="left:1441.08px;top:1725.3px;font-size:18px;color:#fff;font-weight:bold;transform:scaleX(0.9808);transform-origin:0 0;">Online chat</div>
<div class="abs" style="left:2826px;top:1725px;width:29px;height:28px;border:2px solid #2f6f96"></div>
<svg style="left:0;top:0" width="2900" height="1760"><polyline points="2834.500,1742 2840.500,1736 2846.500,1742" stroke="#2f6f96" stroke-width="2" fill="none"/></svg>
</div>
<div class="abs" style="left:982px;top:552px;width:2256px;height:60px;background:#000"></div>
<div class="abs" style="left:982px;top:1760px;width:2256px;height:62px;background:linear-gradient(to bottom,#000 0,#000 70%,#0e0e0e 100%)"></div>
<div class="abs" style="left:982px;top:1342px;width:2256px;height:418px;background:linear-gradient(to bottom,rgba(0,0,0,0),rgba(0,0,0,.4) 88.5%,rgba(0,0,0,.4))"></div>
<svg style="left:0;top:0" width="3354" height="1898"><g fill="#cccccc"><path d="M1037.600 1761.600 v32.500 l32.400 -16.250 z"/><path d="M1129.400 1765 h27.400 v26.600 h-13.800 v-3.600 h10.200 v-19.400 h-23.800 v4.400 l-10.200 -6.800 l10.200 -6.800 z"/><path d="M1206.400 1771.400 h6.800 l12 -9.100 v31.300 l-12 -9.400 h-6.800 z"/></g><g stroke="#cccccc" stroke-width="3.800" fill="none"><path d="M1229.500 1770.700 a7.500 7.500 0 0 1 0 14.400"/><path d="M1229.500 1762.300 a15.700 15.700 0 0 1 0 31.200"/></g></svg>
<div class="t " style="left:1120.78px;top:1776.8px;font-size:16.5px;color:#cccccc;transform:scaleX(0.9725);transform-origin:0 0;">10</div>
<div class="t " style="left:1269.05px;top:1764.7px;font-size:25px;color:#fff;transform:scaleX(0.9718);transform-origin:0 0;">00:19</div>
<div class="t " style="left:1343.20px;top:1764.7px;font-size:25px;color:#fff;transform:scaleX(0.8926);transform-origin:0 0;">/</div>
<div class="t " style="left:1362.79px;top:1764.7px;font-size:25px;color:#fff;transform:scaleX(0.9343);transform-origin:0 0;">00:41</div>
<div class="abs" style="left:1448px;top:1775px;width:1392px;height:6.300px;background:#8c8c8c"></div>
<div class="abs" style="left:1448px;top:1775px;width:668px;height:6.300px;background:#f2f2f2"></div>
<svg style="left:0;top:0" width="3354" height="1898"><g stroke="#e8334a" fill="none" stroke-linejoin="round" stroke-linecap="round"><path d="M2898.700 1776.700 L2900.600 1782.500 L2905.500 1770.500" stroke-width="2.300"/><path d="M2905.500 1770.500 L2909.200 1786.600 L2920.300 1764.300 L2919.600 1794.300 L2928.500 1772" stroke-width="4.500"/><path d="M2928.500 1772 L2933.300 1759.800" stroke-width="2.800"/></g></svg>
<div class="t " style="left:2938.08px;top:1762.0px;font-size:31.4px;color:#e8334a;font-weight:bold;transform:scaleX(0.8928);transform-origin:0 0;">JW</div>
<div class="t " style="left:2981.57px;top:1762.0px;font-size:31.4px;color:#e8334a;transform:scaleX(0.9043);transform-origin:0 0;-webkit-text-stroke:0.4px #000;">PLAYER</div>
<svg style="left:0;top:0" width="3354" height="1898"><g fill="#cccccc"><path d="M3154.300 1793.500 L3156.400 1782.400 L3165.500 1791.600 Z"/><path d="M3186.200 1761.800 L3184.100 1773 L3174.900 1763.900 Z"/></g><g stroke="#cccccc" stroke-width="4.400"><line x1="3160" y1="1788.400" x2="3167.300" y2="1781.200"/><line x1="3180.400" y1="1767.800" x2="3172.900" y2="1775.200"/></g></svg>
</div></div>
<div class="abs" style="left:3208.200px;top:1752.500px;width:119.400px;height:119.400px;border-radius:50%;background:#020a45;z-index:30;box-shadow:2px 8px 22px rgba(20,20,60,.22)"></div>
<svg style="left:0;top:0;z-index:31" width="3354" height="1898"><g fill="#fff"><path d="M3248.800 1786.500 C3262 1781.200 3284 1780.800 3296.800 1785.600 C3300 1795 3299.500 1812 3294.500 1821 C3295 1812 3295 1801 3291.800 1795.500 C3289 1790.500 3274 1787.300 3248.800 1786.500 Z"/><path d="M3246 1791.800 C3256 1790.800 3272 1790.800 3282 1791.800 C3288 1792.400 3289.500 1794 3290 1800 C3290.600 1808 3290.600 1816 3290 1823.500 C3289.500 1829.500 3288 1831 3282 1831.500 L3270.300 1832 L3263.700 1841.100 L3257.200 1832 L3246 1831.500 C3240 1831 3238.500 1829.500 3238 1823.500 C3237.400 1816 3237.400 1808 3238 1800 C3238.500 1794 3240 1792.400 3246 1791.800 Z"/></g></svg>
<svg style="left:0;top:0;z-index:60" width="40" height="1898"><path d="M0 1883 Q1 1893 6.500 1898 L0 1898 Z" fill="#000"/></svg>
</div>
<script>(function(){var w=window.innerWidth||3354;if(w&&Math.abs(w-3354)>1){document.getElementById("root").style.transform="scale("+(w/3354)+")";}})();</script>
</body>
</html>
